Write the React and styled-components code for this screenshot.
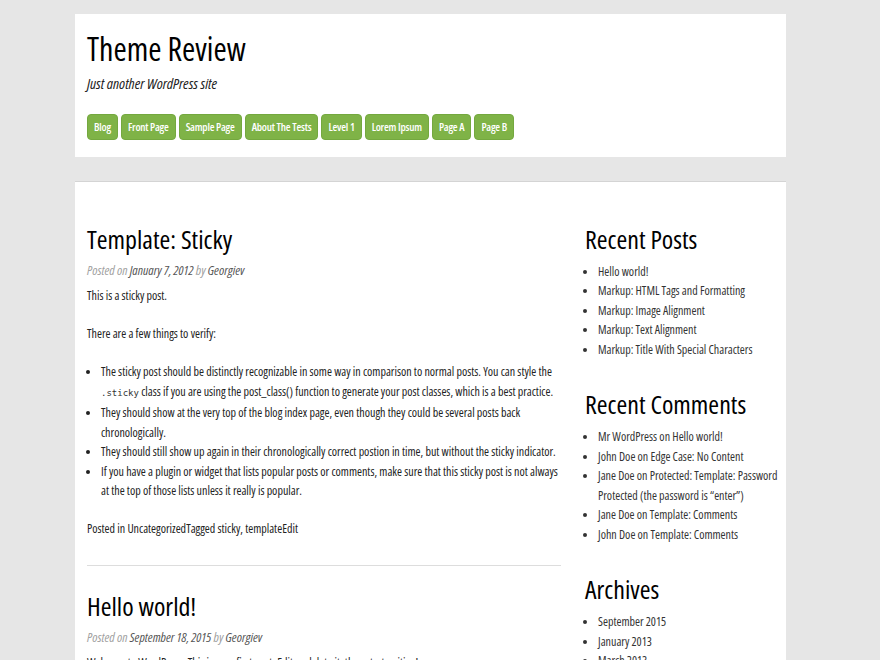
import styled, { createGlobalStyle } from 'styled-components';

const GlobalStyle = createGlobalStyle`
	body {
		margin: 0;
		background-color: #e6e6e6;
		font-family: 'Open Sans', 'DejaVu Sans Condensed', sans-serif;
		font-stretch: 75%;
		font-size: 12px;
		line-height: 19.5px;
		color: #222;
	}
	a {
		color: inherit;
		text-decoration: none;
	}
`;

const Page = styled.div`
	width: 711px;
	margin: 14px 0 0 75px;
`;

const Header = styled.header`
	background-color: #fff;
	padding: 15px 12px 17px;
`;

const SiteTitle = styled.h1`
	margin: 0;
	font-size: 32px;
	line-height: 40px;
	font-weight: 400;
	color: #000;
`;

const Tagline = styled.p`
	margin: 5px 0 0;
	font-size: 15px;
	font-style: italic;
	color: #222;
`;

const Nav = styled.nav`
	display: flex;
	gap: 3px;
	margin-top: 20px;
`;

const NavButton = styled.a`
	display: block;
	padding: 4px 6px;
	border: 1px solid #74a83f;
	border-radius: 4px;
	background-color: #7fb347;
	color: #fff;
	font-size: 11px;
	font-weight: 600;
	letter-spacing: -0.2px;
	line-height: 16px;
`;

const Main = styled.main`
	display: grid;
	grid-template-columns: 474px 199px;
	column-gap: 24px;
	align-items: start;
	margin-top: 24px;
	padding: 17px 2px 0 12px;
	background-color: #fff;
	border-top: 1px solid #d4d4d4;
	min-height: 500px;
`;

const Article = styled.article`
	padding: 23px 0 26px;
	border-bottom: ${p => (p.$last ? 'none' : '1px solid #ddd')};
`;

const PostTitle = styled.h2`
	margin: 0;
	font-size: 26px;
	line-height: 34px;
	font-weight: 400;
	color: #000;
`;

const Meta = styled.div`
	margin: 5px 0 6px;
	font-size: 13px;
	font-style: italic;
	color: #a0a0a0;

	a {
		color: #555;
	}
`;

const Paragraph = styled.p`
	margin: 0 0 18.5px;
`;

const List = styled.ul`
	margin: 0 0 18.5px;
	padding-left: 14px;
	list-style: disc;
`;

const Code = styled.code`
	font-family: 'DejaVu Sans Mono', 'Liberation Mono', monospace;
	font-size: 9px;
	color: #333;
`;

const Footer = styled.footer`
	color: #222;
`;

const Sidebar = styled.aside`
	display: flex;
	flex-direction: column;
	gap: 29px;
	padding-top: 24px;
`;

const WidgetTitle = styled.h2`
	margin: 0 0 7px;
	font-size: 26px;
	line-height: 32px;
	font-weight: 400;
	color: #000;
`;

const WidgetList = styled.ul`
	margin: 0;
	padding-left: 13px;
	list-style: disc;
	color: #333;
`;

const navItems = ['Blog', 'Front Page', 'Sample Page', 'About The Tests', 'Level 1', 'Lorem Ipsum', 'Page A', 'Page B'];

const recentPosts = [
	'Hello world!',
	'Markup: HTML Tags and Formatting',
	'Markup: Image Alignment',
	'Markup: Text Alignment',
	'Markup: Title With Special Characters',
];

const recentComments = [
	['Mr WordPress', 'Hello world!'],
	['John Doe', 'Edge Case: No Content'],
	['Jane Doe', 'Protected: Template: Password Protected (the password is \u201center\u201d)'],
	['Jane Doe', 'Template: Comments'],
	['John Doe', 'Template: Comments'],
];

const archives = ['September 2015', 'January 2013', 'March 2013'];

function PostMeta({ date }) {
	return (
		<Meta>
			Posted on <a href='#'>{date}</a> by <a href='#'>Georgiev</a>
		</Meta>
	);
}

export default function App() {
	return (
		<>
			<GlobalStyle />
			<Page>
				<Header>
					<SiteTitle>Theme Review</SiteTitle>
					<Tagline>Just another WordPress site</Tagline>
					<Nav>
						{navItems.map(item => (
							<NavButton href='#' key={item}>
								{item}
							</NavButton>
						))}
					</Nav>
				</Header>

				<Main>
					<div>
						<Article>
							<PostTitle>Template: Sticky</PostTitle>
							<PostMeta date='January 7, 2012' />
							<Paragraph>This is a sticky post.</Paragraph>
							<Paragraph>There are a few things to verify:</Paragraph>
							<List>
								<li>
									The sticky post should be distinctly recognizable in some way in comparison to normal
									posts. You can style the <Code>.sticky</Code> class if you are using the post_class()
									function to generate your post classes, which is a best practice.
								</li>
								<li>
									They should show at the very top of the blog index page, even though they could be
									several posts back chronologically.
								</li>
								<li>
									They should still show up again in their chronologically correct postion in time, but
									without the sticky indicator.
								</li>
								<li>
									If you have a plugin or widget that lists popular posts or comments, make sure that this
									sticky post is not always at the top of those lists unless it really is popular.
								</li>
							</List>
							<Footer>
								Posted in <a href='#'>Uncategorized</a>Tagged <a href='#'>sticky</a>,{' '}
								<a href='#'>template</a>
								<a href='#'>Edit</a>
							</Footer>
						</Article>

						<Article $last>
							<PostTitle>Hello world!</PostTitle>
							<PostMeta date='September 18, 2015' />
							<Paragraph>
								Welcome to WordPress. This is your first post. Edit or delete it, then start writing!
							</Paragraph>
						</Article>
					</div>

					<Sidebar>
						<section>
							<WidgetTitle>Recent Posts</WidgetTitle>
							<WidgetList>
								{recentPosts.map(post => (
									<li key={post}>
										<a href='#'>{post}</a>
									</li>
								))}
							</WidgetList>
						</section>
						<section>
							<WidgetTitle>Recent Comments</WidgetTitle>
							<WidgetList>
								{recentComments.map(([author, post], i) => (
									<li key={i}>
										{author} on <a href='#'>{post}</a>
									</li>
								))}
							</WidgetList>
						</section>
						<section>
							<WidgetTitle>Archives</WidgetTitle>
							<WidgetList>
								{archives.map(month => (
									<li key={month}>
										<a href='#'>{month}</a>
									</li>
								))}
							</WidgetList>
						</section>
					</Sidebar>
				</Main>
			</Page>
		</>
	);
}
